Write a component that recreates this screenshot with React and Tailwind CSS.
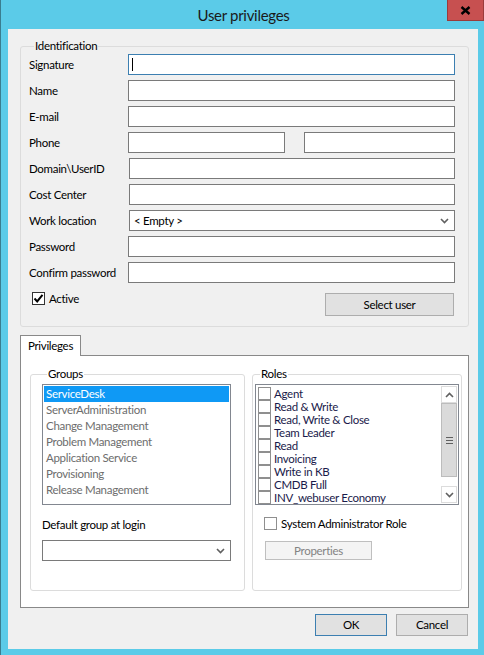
import React from 'react'

const groups = [
  'ServiceDesk',
  'ServerAdministration',
  'Change Management',
  'Problem Management',
  'Application Service',
  'Provisioning',
  'Release Management',
]

const roles = [
  'Agent',
  'Read & Write',
  'Read, Write & Close',
  'Team Leader',
  'Read',
  'Invoicing',
  'Write in KB',
  'CMDB Full',
  'INV_webuser Economy',
]

const Chevron = ({ className }) => (
  <svg width="9" height="6" viewBox="0 0 9 6" className={className}>
    <path d="M1 1 L4.5 4.5 L8 1" fill="none" stroke="#606060" strokeWidth="1.6" />
  </svg>
)

const TextBox = ({ focused, className = '' }) => (
  <div
    className={`h-[21px] bg-white border ${focused ? 'border-[#3c7fb1]' : 'border-[#7a7a7a]'} flex items-center ${className}`}
  >
    {focused && <div className="ml-[3px] w-px h-[13px] bg-black" />}
  </div>
)

const Row = ({ label, children }) => (
  <div className="flex items-center h-[21px]">
    <span className="w-[99px] shrink-0">{label}</span>
    <div className="flex-1 flex">{children}</div>
  </div>
)

const CheckBox = ({ checked, className = '' }) => (
  <div
    className={`w-[13px] h-[13px] bg-white border border-[#8f8f8f] flex items-center justify-center shrink-0 ${className}`}
  >
    {checked && (
      <svg width="11" height="11" viewBox="0 0 11 11">
        <path d="M1.5 5.5 L4.2 8.4 L9.5 1.8" fill="none" stroke="#000" strokeWidth="2" />
      </svg>
    )}
  </div>
)

const GroupBox = ({ title, className = '', children }) => (
  <fieldset className={`border border-[#dcdcdc] rounded-[3px] ${className}`}>
    <legend className="ml-[5px] px-px leading-[14px]">{title}</legend>
    {children}
  </fieldset>
)

function App() {
  return (
    <div className="w-[484px] h-[655px] bg-[#5bcbe8] flex flex-col font-['Segoe_UI','Lato',sans-serif] text-[11.5px] tracking-[-0.3px] text-black border-l border-[#3a7d8f]">
      {/* title bar */}
      <div className="h-[29px] shrink-0 flex items-start relative">
        <div className="flex-1 text-center text-[15px] leading-[30px] text-[#1a1a1a] pl-[2px]">User privileges</div>
        <div className="absolute right-0 top-0 w-[37px] h-[21px] bg-[#c75050] border border-[#9a3b3b] border-t-0 flex items-center justify-center">
          <svg width="11" height="9" viewBox="0 0 11 9">
            <path d="M1.5 1 L9.5 8 M9.5 1 L1.5 8" stroke="#000" strokeWidth="2.4" />
          </svg>
        </div>
      </div>

      {/* client area */}
      <div className="ml-[7px] mr-[6px] mb-[6px] flex-1 bg-[#f0f0f0] flex flex-col pl-[12px] pr-[9px] pt-[10px]">
        <GroupBox title="Identification" className="h-[288px] pl-[8px] pr-[13px]">
          <div className="flex flex-col gap-[5px] pt-[1px]">
            <Row label="Signature"><TextBox focused className="flex-1" /></Row>
            <Row label="Name"><TextBox className="flex-1" /></Row>
            <Row label="E-mail"><TextBox className="flex-1" /></Row>
            <Row label="Phone">
              <TextBox className="w-[157px]" />
              <TextBox className="ml-[19px] flex-1" />
            </Row>
            <Row label="Domain\UserID"><TextBox className="flex-1 ml-px" /></Row>
            <Row label="Cost Center"><TextBox className="flex-1 ml-px" /></Row>
            <Row label="Work location">
              <div className="flex-1 ml-px h-[21px] bg-white border border-[#7a7a7a] flex items-center justify-between pl-[4px] pr-[5px]">
                <span>&lt; Empty &gt;</span>
                <Chevron />
              </div>
            </Row>
            <Row label="Password"><TextBox className="flex-1" /></Row>
            <Row label="Confirm password"><TextBox className="flex-1" /></Row>
          </div>
          <div className="flex items-start mt-[10px]">
            <div className="flex items-center gap-[4px] ml-[3px] -mt-[3px]">
              <CheckBox checked className="border-[#333]" />
              <span>Active</span>
            </div>
            <button className="ml-auto mr-px w-[129px] h-[23px] bg-[#e1e1e1] border border-[#adadad]">
              Select user
            </button>
          </div>
        </GroupBox>

        {/* tabs */}
        <div className="mt-[7px] flex">
          <div className="w-[61px] h-[21px] bg-white border border-[#898989] border-b-0 flex items-center justify-center relative top-px z-10">
            Privileges
          </div>
        </div>
        <div className="h-[253px] bg-white border border-[#898989] flex gap-[7px] pl-[9px] pr-[6px] pt-[11px]">
          <GroupBox title="Groups" className="w-[216px] h-[224px] pl-[11px] pr-[13px]">
            <div className="mt-[3px] h-[121px] border border-[#828790] bg-white p-px">
              {groups.map((g, i) => (
                <div
                  key={g}
                  className={`h-[16px] leading-[16px] pl-[2px] ${i === 0 ? 'bg-[#0f99f5] text-white' : 'text-[#6d6d6d]'}`}
                >
                  {g}
                </div>
              ))}
            </div>
            <div className="mt-[11px]">Default group at login</div>
            <div className="mt-[7px] h-[21px] bg-white border border-[#7a7a7a] flex items-center justify-end pr-[5px]">
              <Chevron />
            </div>
          </GroupBox>

          <GroupBox title="Roles" className="w-[211px] h-[224px] px-[2px]">
            <div className="mt-[3px] h-[121px] border border-[#828790] bg-white flex">
              <div className="flex-1 pt-[2px] pl-[2px]">
                {roles.map((r) => (
                  <div key={r} className="h-[13px] flex items-center gap-[3px] leading-[13px]">
                    <CheckBox className="w-[11px] h-[11px]" />
                    <span className="text-[#1a1a4a] leading-[13px]">{r}</span>
                  </div>
                ))}
              </div>
              <div className="w-[17px] flex flex-col pt-px pb-px pr-px">
                <div className="h-[17px] border border-[#dcdcdc] bg-white flex items-center justify-center">
                  <Chevron className="rotate-180" />
                </div>
                <div className="h-[74px] bg-[#dadada] border border-[#bcbcbc] flex flex-col items-center justify-center gap-[2px]">
                  <div className="w-[7px] h-px bg-[#606060]" />
                  <div className="w-[7px] h-px bg-[#606060]" />
                  <div className="w-[7px] h-px bg-[#606060]" />
                </div>
                <div className="flex-1" />
                <div className="h-[17px] border border-[#dcdcdc] bg-white flex items-center justify-center">
                  <Chevron />
                </div>
              </div>
            </div>
            <div className="mt-[10px] ml-[9px] flex items-center gap-[4px]">
              <CheckBox />
              <span>System Administrator Role</span>
            </div>
            <button className="mt-[9px] ml-[10px] w-[107px] h-[19px] bg-[#f4f4f4] border border-[#bfbfbf] text-[#838383]">
              Properties
            </button>
          </GroupBox>
        </div>

        {/* dialog buttons */}
        <div className="mt-[6px] flex justify-end gap-[9px] pr-[1px]">
          <button className="w-[72px] h-[22px] bg-[#e1e1e1] border border-[#3c7fb1]">OK</button>
          <button className="w-[72px] h-[22px] bg-[#e1e1e1] border border-[#adadad]">Cancel</button>
        </div>
      </div>
    </div>
  )
}

export default App
